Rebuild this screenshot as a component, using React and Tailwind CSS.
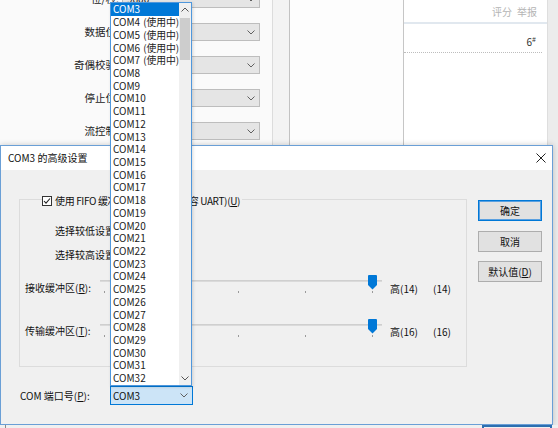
import React from "react";

const ports = [
  "COM3", "COM4 (使用中)", "COM5 (使用中)", "COM6 (使用中)", "COM7 (使用中)",
  ...Array.from({ length: 25 }, (_, i) => "COM" + (i + 8)),
];

const Chevron = ({ up = false, color = "#606060" }) => (
  <svg width="8" height="5" viewBox="0 0 8 5" className="shrink-0">
    <path d={up ? "M0.5 4.5 L4 1 L7.5 4.5" : "M0.5 0.5 L4 4 L7.5 0.5"} stroke={color} strokeWidth="1" fill="none" />
  </svg>
);

const U = ({ children }) => <span className="underline underline-offset-1">{children}</span>;

// background property page rows
const BgRow = ({ label, value }) => (
  <div className="flex items-center h-[18px]">
    <div className="w-[119px] text-right text-[10.5px] leading-[14px] text-[#222] whitespace-nowrap">{label}</div>
    <div className="ml-[3px] w-[138px] h-[18px] border border-[#bdbdbd] bg-[#e5e5e5] flex items-center justify-between pl-[4px] pr-[4px]">
      <span className="text-[10px] leading-[14px] text-[#222]">{value}</span>
      <Chevron />
    </div>
  </div>
);

const Slider = () => (
  <svg width="282" height="20" viewBox="0 0 282 20" className="shrink-0">
    <rect x="0" y="5" width="282" height="2" fill="#dadada" />
    <rect x="0" y="5" width="282" height="1" fill="#cfcfcf" />
    {[4, 71, 138, 205, 272].map(x => (
      <rect key={x} x={x} y="16" width="1" height="2" fill="#9a9a9a" />
    ))}
    <path d="M268 1 Q268 0 269 0 H276 Q277 0 277 1 V10 L272.5 14.5 L268 10 Z" fill="#0078d7" />
  </svg>
);

const Btn = ({ children, primary }) => (
  <div className={"w-[64px] h-[21px] flex items-center justify-center bg-[#e1e1e1] text-[10px] leading-[14px] text-[#111] border " +
    (primary ? "border-[#0078d7] shadow-[inset_0_0_0_1px_#5aa0e0]" : "border-[#adadad]")}>
    {children}
  </div>
);

const PortItem = ({ name, active }) => {
  const [com, tag] = name.split(" ");
  return (
    <div className={"h-[12.73px] pl-[2px] flex items-center text-[10px] leading-[12px] whitespace-nowrap " +
      (active ? "bg-[#0078d7] text-white" : "text-[#222]")}>
      <span>{com}</span>
      {tag && <span className="ml-[3px] text-[9.8px] leading-[12px]">{tag}</span>}
    </div>
  );
};

export default function App() {
  return (
    <div className="relative w-[558px] h-[428px] overflow-hidden bg-[#f6f6f6] font-['Noto_Sans_CJK_SC','Noto_Sans',sans-serif]">
      {/* window behind */}
      <div className="absolute left-0 top-0 w-[558px] h-[428px] flex">
        <div className="w-[272px] bg-[#fafafa] flex flex-col gap-[15px] -mt-[10px]">
          <BgRow label="位/秒:" value="9600" />
          <BgRow label="数据位:" value="8" />
          <BgRow label="奇偶校验:" value="无" />
          <BgRow label="停止位:" value="1" />
          <BgRow label="流控制:" value="无" />
        </div>
        <div className="w-[18px] border-l border-[#dcdcdc] border-r border-r-[#c4c4c4] bg-[#f3f3f3]" />
        <div className="w-[114px] bg-[#fdfdfd] border-r border-[#c6c6c6] shadow-[1px_0_2px_rgba(0,0,0,0.12)]" />
        <div className="w-[143px] bg-white flex flex-col">
          <div className="h-[22px] flex items-center justify-end pr-[10px] gap-[5px] text-[10px] text-[#b4b4b4]">
            <span>评分</span><span>举报</span>
          </div>
          <div className="h-[2px] bg-[#e1e8ef]" />
          <div className="h-[28px] flex items-end justify-end pr-[11px] pb-[4px] text-[10px] leading-[12px] text-[#333]">
            <span>6</span><span className="text-[7px] leading-[8px] relative -top-[5px]">#</span>
          </div>
          <div className="mr-[5px] border-t border-dotted border-[#bdbdbd]" />
        </div>
        <div className="flex-1 bg-[#ececec] border-l border-[#dedede]" />
      </div>

      {/* dialog */}
      <div className="absolute left-0 top-[145px] w-[553px] h-[280px] border border-[#6a9fd6] bg-[#f0f0f0] flex flex-col shadow-[0_0_6px_rgba(0,0,0,0.2)]">
        <div className="h-[24px] bg-white flex items-center justify-between pl-[7px] pr-[6px]">
          <span className="text-[10px] leading-[14px] text-[#111]">COM3 的高级设置</span>
          <svg width="10" height="10" viewBox="0 0 10 10">
            <path d="M0.5 0.5 L9.5 9.5 M9.5 0.5 L0.5 9.5" stroke="#222" strokeWidth="1" />
          </svg>
        </div>
        <div className="flex pt-[29px] pl-[18px]">
          <div className="flex flex-col">
            <div className="w-[448px] h-[168px] border border-[#dcdcdc] flex flex-col text-[10px] leading-[14px] text-[#111]">
              <div className="-mt-[6px] ml-[22px] h-[14px] self-start flex items-center gap-[3px] bg-[#f0f0f0] pr-[2px]">
                <div className="w-[10px] h-[10px] border border-[#333] bg-white flex items-center justify-center">
                  <svg width="8" height="8" viewBox="0 0 8 8"><path d="M1 4 L3 6.2 L7 1.5" stroke="#222" strokeWidth="1.1" fill="none" /></svg>
                </div>
                <span className="tracking-[-0.35px]">使用 FIFO 缓冲区(需要 16550 兼容 UART)(<U>U</U>)</span>
              </div>
              <div className="mt-[16px] pl-[35px] h-[14px]">选择较低设置以纠正连接问题。</div>
              <div className="mt-[10px] pl-[35px] h-[14px]">选择较高设置以提高性能。</div>
              <div className="mt-[13px] flex h-[22px]">
                <div className="w-[80px] pl-[5px] mt-[7px] leading-[12px]">接收缓冲区(<U>R</U>):</div>
                <Slider />
                <div className="ml-[8px] mt-[8px] leading-[12px] w-[43px]">高(14)</div>
                <div className="mt-[8px] leading-[12px]">(14)</div>
              </div>
              <div className="mt-[22px] flex h-[22px]">
                <div className="w-[80px] pl-[5px] mt-[6px] leading-[12px]">传输缓冲区(<U>T</U>):</div>
                <Slider />
                <div className="ml-[8px] mt-[7px] leading-[12px] w-[43px]">高(16)</div>
                <div className="mt-[7px] leading-[12px]">(16)</div>
              </div>
            </div>
            <div className="mt-[19px] flex items-center text-[10px] leading-[14px] text-[#111]">
              <div className="w-[91px] pl-[1px]">COM 端口号(<U>P</U>):</div>
              <div className="w-[83px] h-[19px] border border-[#0078d7] bg-[#cce4f7] flex items-center justify-between pl-[2px] pr-[4px]">
                <span>COM3</span>
                <Chevron />
              </div>
            </div>
          </div>
          <div className="ml-[11px] mt-[1px] flex flex-col">
            <Btn primary>确定</Btn>
            <div className="mt-[10px]"><Btn>取消</Btn></div>
            <div className="mt-[9px]"><Btn>默认值(<U>D</U>)</Btn></div>
          </div>
        </div>
      </div>

      {/* dialog copy behind, bottom sliver */}
      <div className="absolute left-0 top-[425px] w-[558px] h-[3px] overflow-hidden bg-[#f0f0f0]">
        <div className="flex items-start">
          <div className="ml-[5px] w-[1px] h-[3px] bg-[#8a8a8a]" />
          <div className="ml-[40px] text-[10px] leading-[14px] text-[#111] mt-[1px]">☑使用 FIFO 缓冲区(需要 16550 兼容 UART)(U)</div>
          <div className="ml-auto mr-[6px] w-[70px] h-[4px] border-t-2 border-x-2 border-[#2d6fb0]" />
        </div>
      </div>

      {/* open dropdown list */}
      <div className="absolute left-[110px] top-[2px] w-[82px] h-[384px] border border-[#4f97dc] bg-white flex shadow-[1px_1px_3px_rgba(0,0,0,0.15)]">
        <div className="w-[68px] flex flex-col overflow-hidden">
          {ports.map((p, i) => <PortItem key={p} name={p} active={i === 0} />)}
        </div>
        <div className="flex-1 bg-[#f0f0f0] flex flex-col">
          <div className="h-[13px] flex items-center justify-center"><Chevron up color="#555" /></div>
          <div className="mt-[2px] mx-[1px] h-[42px] bg-[#cdcdcd]" />
          <div className="flex-1" />
          <div className="h-[13px] flex items-center justify-center"><Chevron color="#555" /></div>
        </div>
      </div>
    </div>
  );
}
